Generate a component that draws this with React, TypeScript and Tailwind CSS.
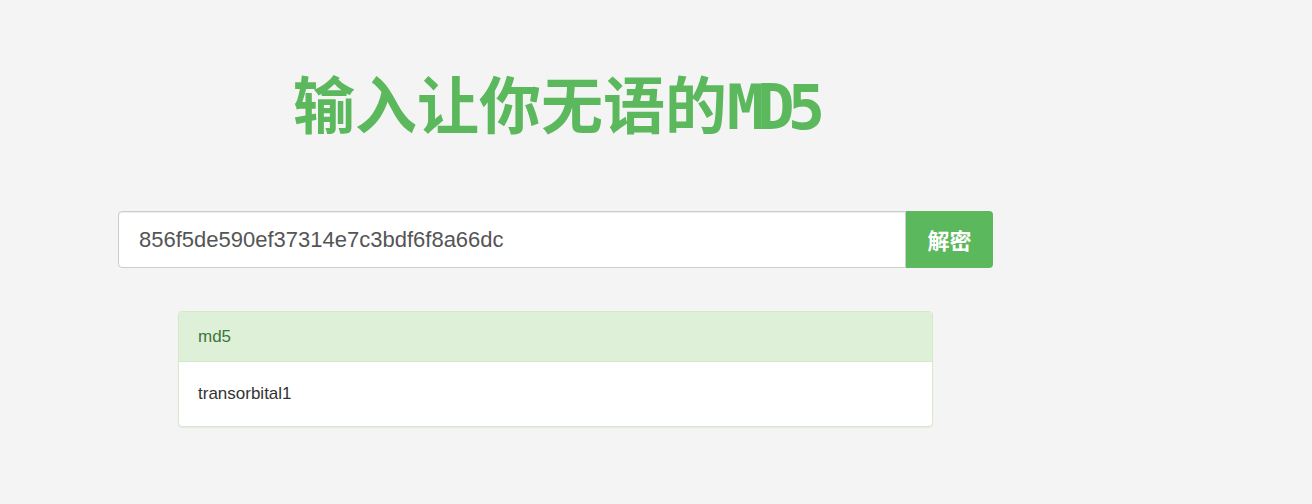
import React from 'react';

const green = '#5cb85c';

const App: React.FC = () => {
  const hash = '856f5de590ef37314e7c3bdf6f8a66dc';

  return (
    <div className="min-h-screen w-full bg-[#f4f4f4] font-['Liberation_Sans','Noto_Sans_CJK_SC',sans-serif]">
      <div className="ml-[118px] w-[875px] pt-[68px]">
        {/* 标题 */}
        <h1 className="text-center text-[62px] leading-[68px] font-bold text-[#5cb85c] font-['Noto_Sans_CJK_SC',sans-serif]">
          输入让你无语的
          <span className="font-['DejaVu_Sans_Mono',monospace] tracking-[-7px]">MD5</span>
        </h1>

        {/* 输入框 */}
        <div className="mt-[69px] flex h-[57px]">
          <input
            type="text"
            defaultValue={hash}
            className="h-full flex-1 rounded-l-[4px] border border-[#cccccc] bg-white px-[20px] text-[22px] text-[#555555] shadow-[inset_0_1px_1px_rgba(0,0,0,0.075)] outline-none"
          />
          <button
            className="h-full w-[87px] rounded-r-[4px] text-[22px] font-bold text-white font-['Noto_Sans_CJK_SC',sans-serif]"
            style={{ backgroundColor: green }}
          >
            解密
          </button>
        </div>

        {/* 结果 */}
        <div className="ml-[60px] mt-[43px] w-[755px] overflow-hidden rounded-[4px] border border-[#d6e9c6] bg-white shadow-[0_1px_1px_rgba(0,0,0,0.05)]">
          <div className="flex h-[50px] items-center border-b border-[#d6e9c6] bg-[#dff0d8] px-[19px] text-[17px] text-[#3c763d]">
            md5
          </div>
          <div className="flex h-[64px] items-center px-[19px] text-[17px] text-[#333333]">
            transorbital1
          </div>
        </div>
      </div>
    </div>
  );
};

export default App;
